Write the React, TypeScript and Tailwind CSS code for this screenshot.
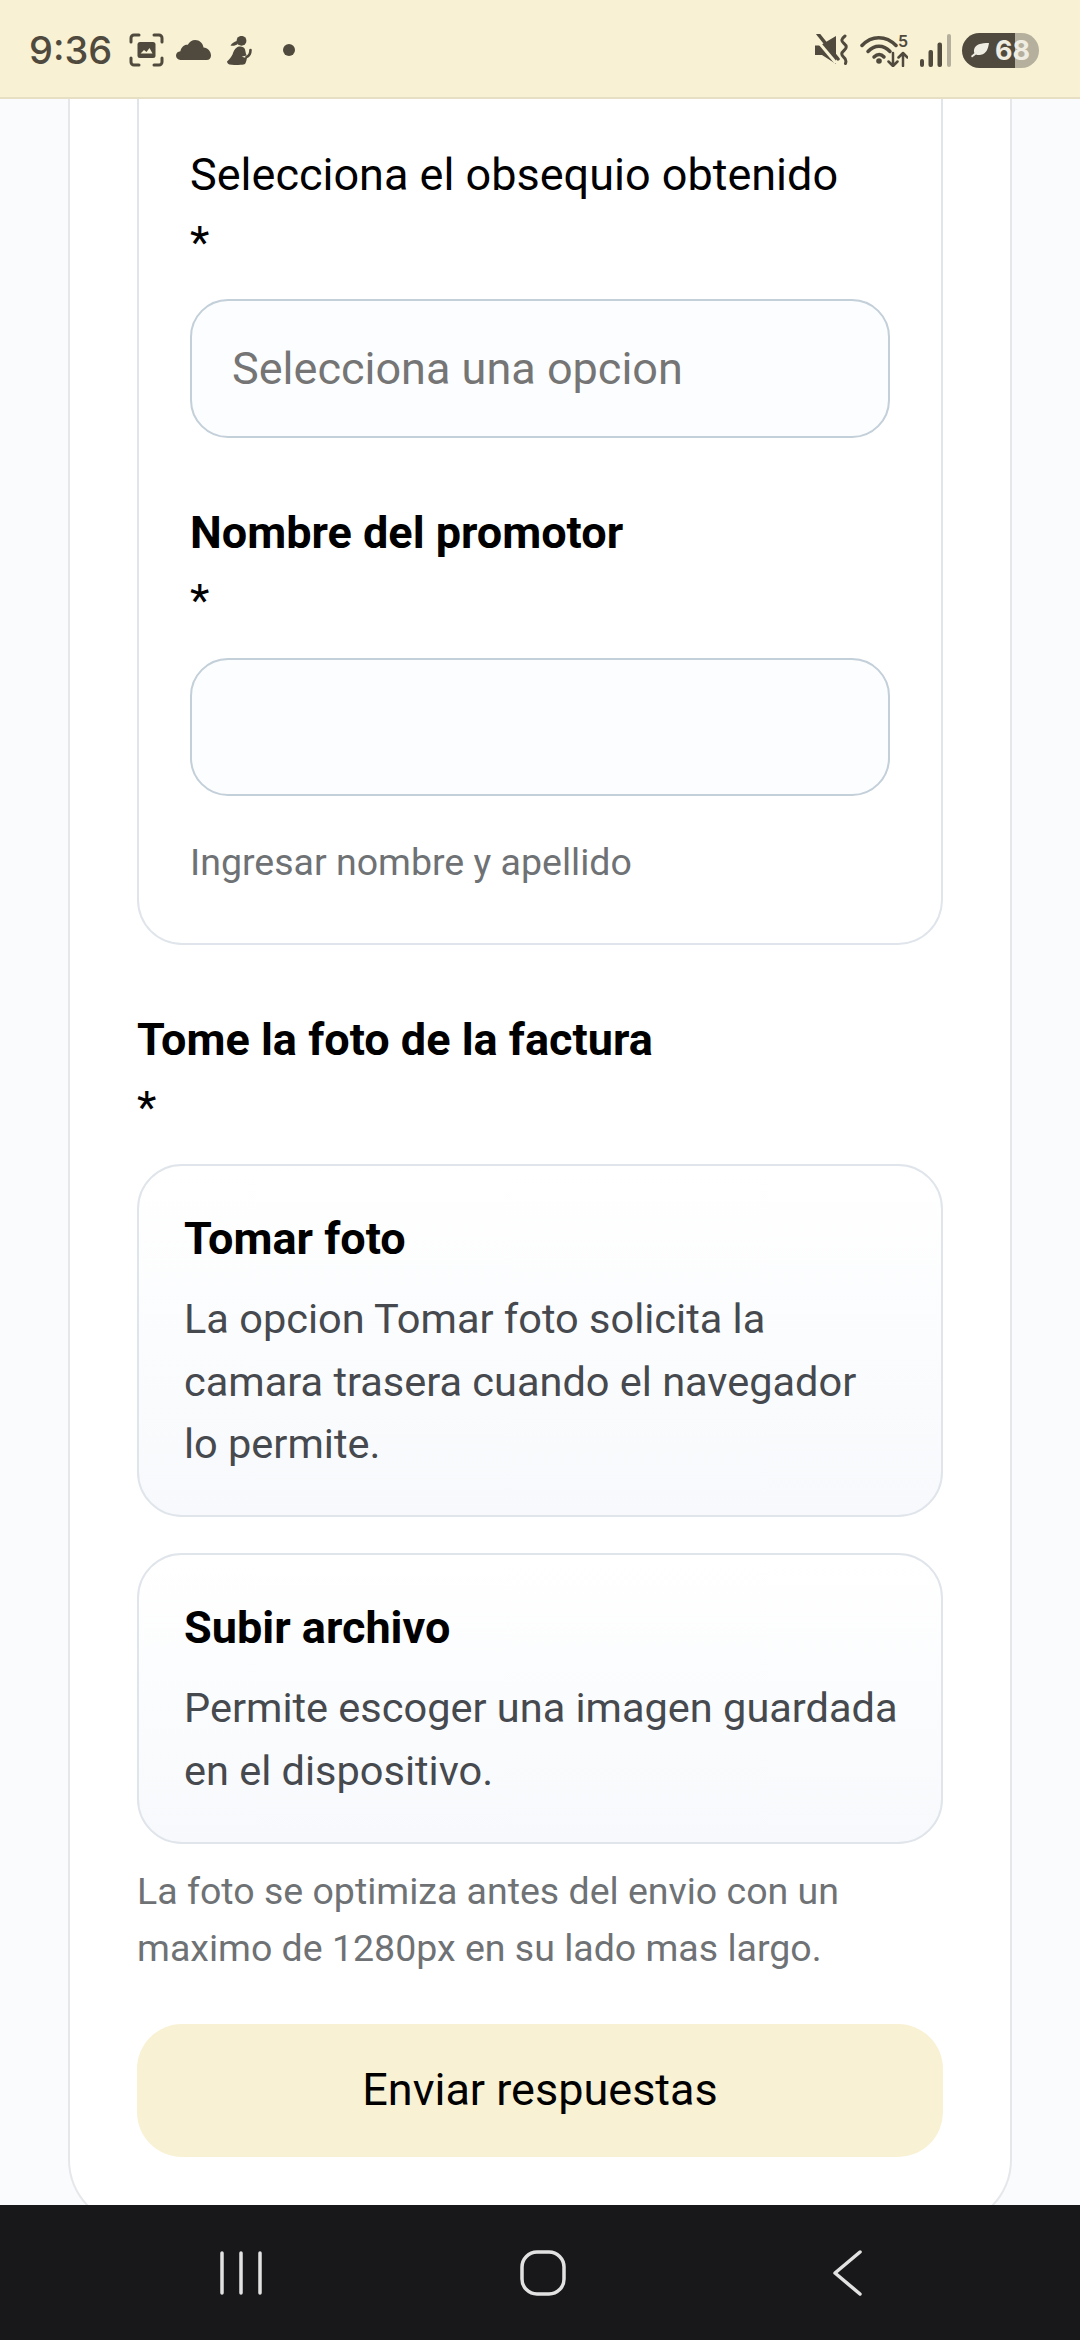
const ink = "#4f4a3d";

const ScreenshotIcon = () => (
  <svg width="35" height="34" viewBox="0 0 35 34" fill="none" className="shrink-0">
    <path
      d="M10 2H5a3 3 0 0 0-3 3v4M25 2h5a3 3 0 0 1 3 3v4M10 32H5a3 3 0 0 1-3-3v-4M25 32h5a3 3 0 0 0 3-3v-4"
      stroke={ink}
      strokeWidth="3"
      strokeLinecap="round"
    />
    <rect x="8.5" y="9" width="18" height="16" rx="2.5" fill={ink} />
    <path d="M11.5 20.5l3.5-3.5 2.5 2 3-4 3 5.5z" fill="#f8f1d4" />
  </svg>
);

const CloudIcon = () => (
  <svg width="35" height="20" viewBox="0 0 35 20" className="shrink-0">
    <path
      d="M4.5 20C1.8 20 0 18 0 15.6c0-2.4 1.9-4.3 4.4-4.4C5.3 6.8 8.6 4.3 11.8 4.8 13.6 1.8 16 0 19.2 0c4.400 0 7.700 3.200 8.300 7.500 4.200.2 7.500 3.700 7.500 8 0 2.500-1.600 4.500-4.300 4.500z"
      fill={ink}
    />
  </svg>
);

const FigureIcon = () => (
  <svg width="25" height="29" viewBox="0 0 25 29" fill="none" className="shrink-0">
    <circle cx="14.500" cy="4.800" r="4.900" fill={ink} />
    <path d="M10 5C8 5.500 5 7 3.500 9.500c2.500.6 5 .2 7.500-1.500z" fill={ink} />
    <path
      d="M10.500 11c3-1 6.500-.5 7.500 2.500.8 2.500.5 3.500 1.500 5.500-.5 1-2.500 1.500-4.500 1 1 1.500 3 1.800 5 1.300-.2 2.500-.8 4.700-2 6.700-4 1.300-11 1.300-15.500.5C1 28 0 26.500 0 25.500c2-2 4.500-4.500 5.500-7 1-3 2-6 5-7.500z"
      fill={ink}
    />
    <path d="M19.500 21c2.500-1 4-3.500 4-7" stroke={ink} strokeWidth="2.600" strokeLinecap="round" />
  </svg>
);

const MuteIcon = () => (
  <svg width="33" height="32" viewBox="0 0 33 32" fill="none" className="shrink-0">
    <path d="M0 11.500h5L21 2v28L7 21H0z" fill={ink} />
    <path d="M0 4l21 25" stroke="#f8f1d4" strokeWidth="3" />
    <path d="M3 0l20 25" stroke={ink} strokeWidth="3.500" strokeLinecap="round" />
    <path
      d="M30 2c-4 3-4 5-1 7.500 3 2.500 3 4.500 0 7-3 2.500-3 4.500 0 7 2 1.500 2.500 3 1.500 6"
      stroke={ink}
      strokeWidth="3"
      strokeLinecap="round"
    />
  </svg>
);

const WifiIcon = () => (
  <svg width="48" height="33" viewBox="0 0 48 33" fill="none" className="shrink-0">
    <path d="M2 11.500C11.500 1 26 1 36 11.500" stroke={ink} strokeWidth="3.500" strokeLinecap="round" />
    <path d="M8 17.500c6.500-7 15.500-7 22 0" stroke={ink} strokeWidth="3.500" strokeLinecap="round" />
    <path d="M14 23c3.500-3.500 7-3.500 10 0" stroke={ink} strokeWidth="3.500" strokeLinecap="round" />
    <circle cx="19" cy="27" r="2.800" fill={ink} />
    <path d="M33 19v13M28.500 27.500l4.500 4.500 4.500-4.500" stroke={ink} strokeWidth="2.500" strokeLinecap="round" strokeLinejoin="round" />
    <path d="M43 32V19M38.500 23.500L43 19l4.500 4.500" stroke={ink} strokeWidth="2.500" strokeLinecap="round" strokeLinejoin="round" />
  </svg>
);

const SignalIcon = () => (
  <svg width="31" height="33" viewBox="0 0 31 33" className="shrink-0">
    <rect x="0" y="25" width="4" height="8" rx="2" fill={ink} />
    <rect x="8.500" y="16" width="4.500" height="17" rx="2" fill={ink} />
    <rect x="17.500" y="8.500" width="4.500" height="24.500" rx="2" fill={ink} />
    <rect x="27" y="0" width="4" height="33" rx="2" fill="#b5b09d" />
  </svg>
);

const LeafIcon = () => (
  <svg width="19" height="15" viewBox="0 0 19 15" className="shrink-0">
    <path d="M19 0C11 0 5 1 4 7c-.2 1.300 0 2.200.5 3L1 13l1 1.500L6 11.500c1.500.7 3 .8 5 .3C16.500 10.500 18 6 19 0z" fill="#efece2" />
  </svg>
);

const Battery = () => (
  <div className="ml-[11px] flex h-[35px] w-[77px] items-center rounded-full bg-[linear-gradient(90deg,#4f4a3d_0,#4f4a3d_53px,#b5b09d_53px,#b5b09d_100%)] pl-[8px]">
    <LeafIcon />
    <span className="ml-[6px] font-['Inter',sans-serif] text-[27px] font-bold leading-none text-[#efece2]">68</span>
  </div>
);

const StatusBar = () => (
  <div className="flex h-[99px] shrink-0 items-center justify-between border-b-[2px] border-[#e6dfc4] bg-[#f8f1d4] pl-[29px] pr-[41px] pt-[3px]">
    <div className="flex items-center">
      <span className="w-[100px] font-['Inter',sans-serif] text-[38px] font-medium leading-none text-[#4f4a3d]">9:36</span>
      <ScreenshotIcon />
      <div className="ml-[12px]"><CloudIcon /></div>
      <div className="ml-[16px]"><FigureIcon /></div>
      <div className="ml-[31px] size-[12px] rounded-full bg-[#4f4a3d]" />
    </div>
    <div className="flex items-center">
      <MuteIcon />
      <div className="ml-[12px]">
        <div className="relative">
          <WifiIcon />
          <span className="absolute right-0 top-[-1px] font-['Inter',sans-serif] text-[16px] font-semibold leading-none text-[#4f4a3d]">5</span>
        </div>
      </div>
      <div className="ml-[12px]"><SignalIcon /></div>
      <Battery />
    </div>
  </div>
);

const Label = ({ text, bold }: { text: string; bold?: boolean }) => (
  <div className="text-[45px] leading-[64px] text-black">
    <div className={bold ? "font-bold" : ""}>{text}</div>
    <div className="h-[64px] leading-[72px]">*</div>
  </div>
);

const UploadCard = ({ title, body, right }: { title: string; body: string; right: string }) => (
  <div className={`rounded-[45px] border-[2px] border-[#e0e5eb] bg-[linear-gradient(180deg,#ffffff,#f7f9fc)] pb-[39.5px] pl-[45px] pt-[43px] ${right}`}>
    <h3 className="text-[45px] font-bold leading-[60px] text-black">{title}</h3>
    <p className="mt-[19px] text-[41.5px] leading-[62.5px] text-[#46494e]">{body}</p>
  </div>
);

export default function App() {
  return (
    <div className="flex h-[2340px] w-[1080px] flex-col overflow-hidden bg-white font-['Roboto',sans-serif]">
      <StatusBar />
      <main className="min-h-0 flex-1 overflow-hidden bg-[#f9fbfd] px-[68px]">
        <div className="rounded-b-[66px] border-x-[2px] border-b-[2px] border-[#e5e7eb] bg-white px-[67px] pb-[67px]">
          <section className="rounded-b-[45px] border-x-[2px] border-b-[2px] border-[#e0e5eb] px-[51px] pb-[52px] pt-[44px]">
            <Label text="Selecciona el obsequio obtenido" />
            <input
              readOnly
              placeholder="Selecciona una opcion"
              className="mt-[28px] block h-[139px] w-full rounded-[38px] border-[2px] border-[#c3cfd9] bg-[#fcfdfe] px-[40px] text-[45px] text-black placeholder:text-[#757575]"
            />
            <div className="mt-[63px]">
              <Label text="Nombre del promotor" bold />
            </div>
            <input
              readOnly
              className="mt-[29px] block h-[138px] w-full rounded-[38px] border-[2px] border-[#c3cfd9] bg-[#fcfdfe] px-[40px] text-[45px]"
            />
            <p className="mt-[38px] text-[37.5px] leading-[57px] text-[#6f7275]">Ingresar nombre y apellido</p>
          </section>

          <section className="mt-[63px]">
            <Label text="Tome la foto de la factura" bold />
            <div className="mt-[28px] flex flex-col gap-[36px]">
              <UploadCard
                title="Tomar foto"
                body="La opcion Tomar foto solicita la camara trasera cuando el navegador lo permite."
                right="pr-[60px]"
              />
              <UploadCard
                title="Subir archivo"
                body="Permite escoger una imagen guardada en el dispositivo."
                right="pr-[40px]"
              />
            </div>
            <p className="mt-[19px] text-[37.5px] leading-[57px] text-[#6f7275]">
              La foto se optimiza antes del envio con un maximo de 1280px en su lado mas largo.
            </p>
          </section>

          <button className="mt-[47px] block h-[133px] w-full rounded-[45px] bg-[#f8f1d4] text-[45px] text-black">
            Enviar respuestas
          </button>
        </div>
      </main>
      <nav className="flex h-[135px] shrink-0 items-center bg-[#18181a] pl-[220px]">
        <svg width="42" height="44" viewBox="0 0 42 44" fill="none" className="shrink-0">
          <path d="M2 2v40M21 2v40M40 2v40" stroke="#e2e2e2" strokeWidth="3.500" strokeLinecap="round" />
        </svg>
        <svg width="46" height="46" viewBox="0 0 46 46" fill="none" className="ml-[258px] shrink-0">
          <rect x="2" y="2" width="42" height="42" rx="15" stroke="#e2e2e2" strokeWidth="3.500" />
        </svg>
        <svg width="29" height="46" viewBox="0 0 29 46" fill="none" className="ml-[267px] shrink-0">
          <path d="M27 2L2 23l25 21" stroke="#e2e2e2" strokeWidth="3.500" strokeLinecap="round" strokeLinejoin="round" />
        </svg>
      </nav>
    </div>
  );
}
